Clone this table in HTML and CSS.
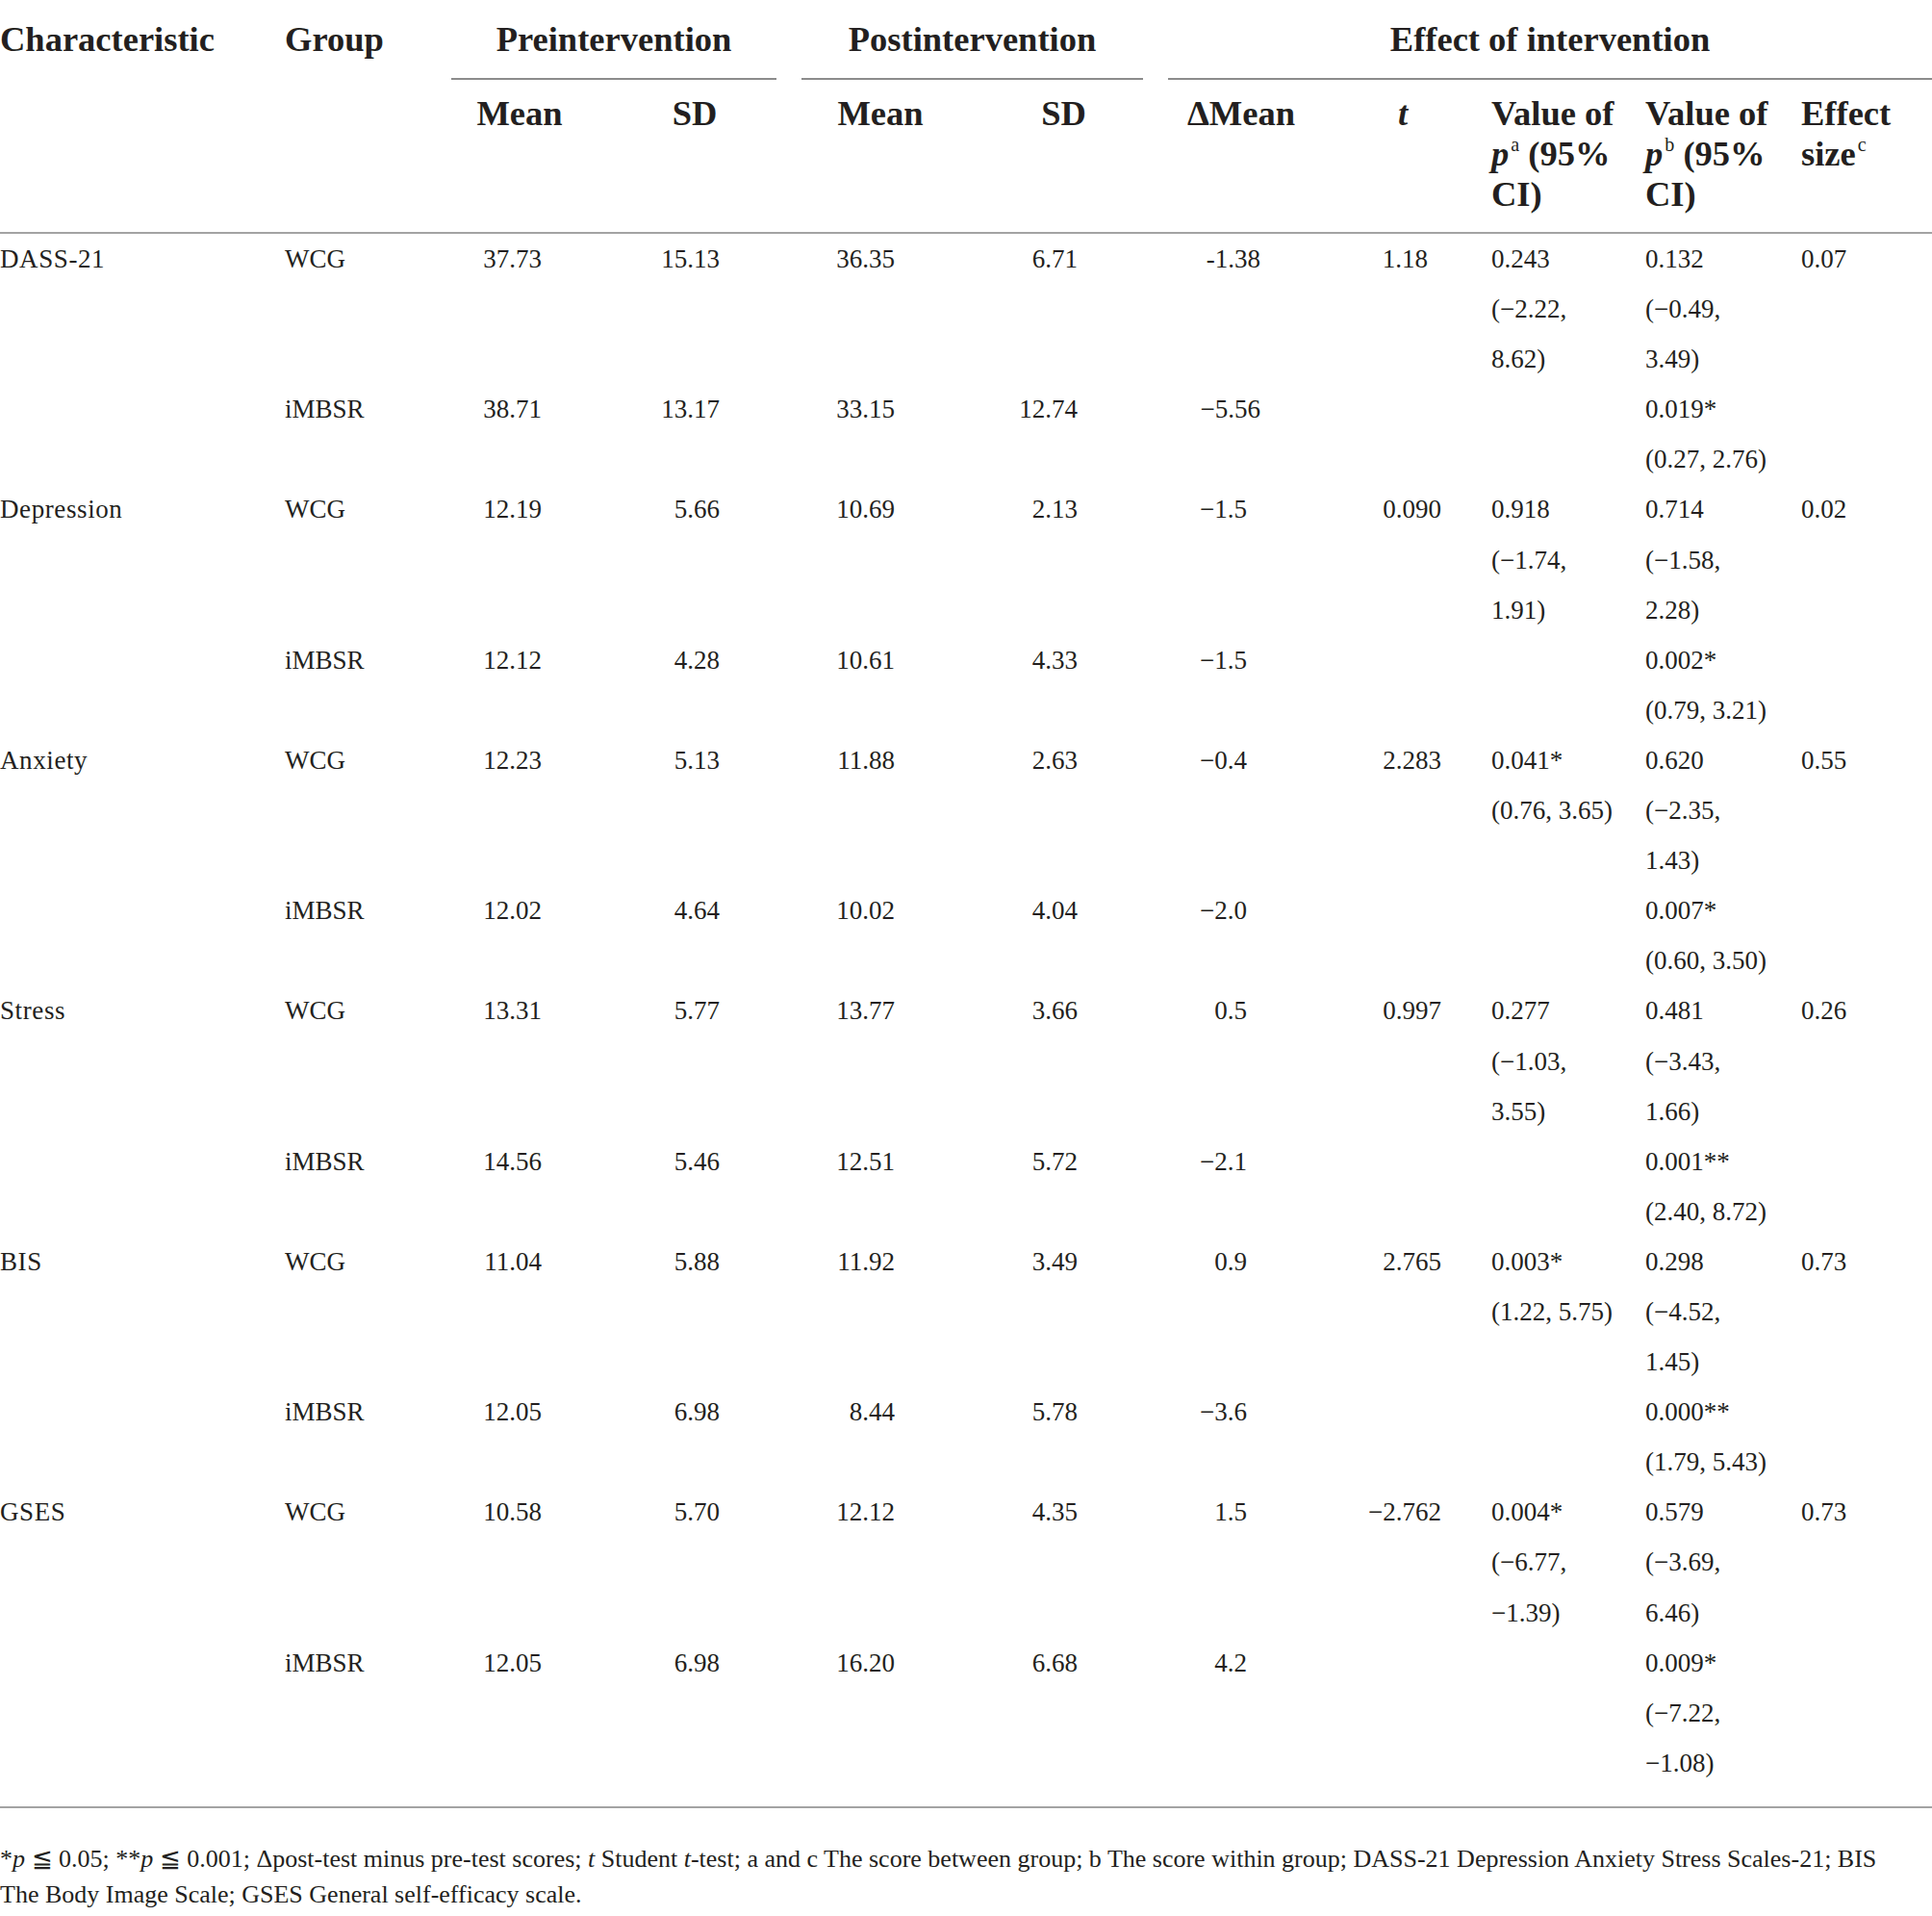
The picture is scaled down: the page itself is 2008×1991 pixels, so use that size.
FILE: index.html
```html
<!DOCTYPE html>
<html lang="en">
<head>
<meta charset="utf-8">
<title>Effect of intervention</title>
<link rel="stylesheet" href="styles.css">
</head>
<body>
<table class="tbl">
  <colgroup>
    <col class="w-char"><col class="w-group"><col class="w-pm"><col class="w-ps"><col class="w-qm"><col class="w-qs"><col class="w-dm"><col class="w-t"><col class="w-pa"><col class="w-pb"><col class="w-es">
  </colgroup>
  <thead>
    <tr class="h1">
      <th rowspan="2" class="c-char">Characteristic</th>
      <th rowspan="2" class="c-group">Group</th>
      <th colspan="2" class="span"><span class="rule">Preintervention</span></th>
      <th colspan="2" class="span"><span class="rule">Postintervention</span></th>
      <th colspan="5" class="span c-last"><span class="rule">Effect of intervention</span></th>
    </tr>
    <tr class="h2">
      <th class="ctr">Mean</th>
      <th class="ctr">SD</th>
      <th class="ctr">Mean</th>
      <th class="ctr">SD</th>
      <th class="ctr">ΔMean</th>
      <th class="ctr"><i>t</i></th>
      <th class="lft">Value of<br><i>p</i><sup>a</sup> (95%<br>CI)</th>
      <th class="lft">Value of<br><i>p</i><sup>b</sup> (95%<br>CI)</th>
      <th class="lft c-last">Effect<br>size<sup>c</sup></th>
    </tr>
  </thead>
  <tbody>
    <tr>
      <td class="c-char">DASS-21</td><td>WCG</td>
      <td class="n pm">37.73</td><td class="n ps">15.13</td><td class="n qm">36.35</td><td class="n qs">6.71</td>
      <td class="n dm">-1.38</td><td class="n tt d2">1.18</td>
      <td>0.243<br>(−2.22,<br>8.62)</td><td>0.132<br>(−0.49,<br>3.49)</td><td class="c-last">0.07</td>
    </tr>
    <tr>
      <td class="c-char"></td><td>iMBSR</td>
      <td class="n pm">38.71</td><td class="n ps">13.17</td><td class="n qm">33.15</td><td class="n qs">12.74</td>
      <td class="n dm">−5.56</td><td></td>
      <td></td><td>0.019*<br>(0.27, 2.76)</td><td class="c-last"></td>
    </tr>
    <tr>
      <td class="c-char">Depression</td><td>WCG</td>
      <td class="n pm">12.19</td><td class="n ps">5.66</td><td class="n qm">10.69</td><td class="n qs">2.13</td>
      <td class="n dm d1">−1.5</td><td class="n tt">0.090</td>
      <td>0.918<br>(−1.74,<br>1.91)</td><td>0.714<br>(−1.58,<br>2.28)</td><td class="c-last">0.02</td>
    </tr>
    <tr>
      <td class="c-char"></td><td>iMBSR</td>
      <td class="n pm">12.12</td><td class="n ps">4.28</td><td class="n qm">10.61</td><td class="n qs">4.33</td>
      <td class="n dm d1">−1.5</td><td></td>
      <td></td><td>0.002*<br>(0.79, 3.21)</td><td class="c-last"></td>
    </tr>
    <tr>
      <td class="c-char">Anxiety</td><td>WCG</td>
      <td class="n pm">12.23</td><td class="n ps">5.13</td><td class="n qm">11.88</td><td class="n qs">2.63</td>
      <td class="n dm d1">−0.4</td><td class="n tt">2.283</td>
      <td>0.041*<br>(0.76, 3.65)</td><td>0.620<br>(−2.35,<br>1.43)</td><td class="c-last">0.55</td>
    </tr>
    <tr>
      <td class="c-char"></td><td>iMBSR</td>
      <td class="n pm">12.02</td><td class="n ps">4.64</td><td class="n qm">10.02</td><td class="n qs">4.04</td>
      <td class="n dm d1">−2.0</td><td></td>
      <td></td><td>0.007*<br>(0.60, 3.50)</td><td class="c-last"></td>
    </tr>
    <tr>
      <td class="c-char">Stress</td><td>WCG</td>
      <td class="n pm">13.31</td><td class="n ps">5.77</td><td class="n qm">13.77</td><td class="n qs">3.66</td>
      <td class="n dm d1">0.5</td><td class="n tt">0.997</td>
      <td>0.277<br>(−1.03,<br>3.55)</td><td>0.481<br>(−3.43,<br>1.66)</td><td class="c-last">0.26</td>
    </tr>
    <tr>
      <td class="c-char"></td><td>iMBSR</td>
      <td class="n pm">14.56</td><td class="n ps">5.46</td><td class="n qm">12.51</td><td class="n qs">5.72</td>
      <td class="n dm d1">−2.1</td><td></td>
      <td></td><td>0.001**<br>(2.40, 8.72)</td><td class="c-last"></td>
    </tr>
    <tr>
      <td class="c-char">BIS</td><td>WCG</td>
      <td class="n pm">11.04</td><td class="n ps">5.88</td><td class="n qm">11.92</td><td class="n qs">3.49</td>
      <td class="n dm d1">0.9</td><td class="n tt">2.765</td>
      <td>0.003*<br>(1.22, 5.75)</td><td>0.298<br>(−4.52,<br>1.45)</td><td class="c-last">0.73</td>
    </tr>
    <tr>
      <td class="c-char"></td><td>iMBSR</td>
      <td class="n pm">12.05</td><td class="n ps">6.98</td><td class="n qm">8.44</td><td class="n qs">5.78</td>
      <td class="n dm d1">−3.6</td><td></td>
      <td></td><td>0.000**<br>(1.79, 5.43)</td><td class="c-last"></td>
    </tr>
    <tr>
      <td class="c-char">GSES</td><td>WCG</td>
      <td class="n pm">10.58</td><td class="n ps">5.70</td><td class="n qm">12.12</td><td class="n qs">4.35</td>
      <td class="n dm d1">1.5</td><td class="n tt">−2.762</td>
      <td>0.004*<br>(−6.77,<br>−1.39)</td><td>0.579<br>(−3.69,<br>6.46)</td><td class="c-last">0.73</td>
    </tr>
    <tr class="last">
      <td class="c-char"></td><td>iMBSR</td>
      <td class="n pm">12.05</td><td class="n ps">6.98</td><td class="n qm">16.20</td><td class="n qs">6.68</td>
      <td class="n dm d1">4.2</td><td></td>
      <td></td><td>0.009*<br>(−7.22,<br>−1.08)</td><td class="c-last"></td>
    </tr>
  </tbody>
</table>
<p class="note">*<i>p</i> ≦ 0.05; **<i>p</i> ≦ 0.001; Δpost-test minus pre-test scores; <i>t</i> Student <i>t</i>-test; a and c The score between group; b The score within group; DASS-21 Depression Anxiety Stress Scales-21; BIS<br>The Body Image Scale; GSES General self-efficacy scale.</p>
</body>
</html>
```

FILE: styles.css
```css
html, body {
  margin: 0;
  padding: 0;
  background: #ffffff;
}

body {
  width: 2008px;
  color: #231f20;
  font-family: "Liberation Serif", "Times New Roman", "DejaVu Serif", serif;
}

.tbl {
  width: 2008px;
  table-layout: fixed;
  border-collapse: collapse;
  border-spacing: 0;
}

.w-char { width: 283px; }
.w-group { width: 173px; }
.w-pm { width: 168px; }
.w-ps { width: 196px; }
.w-qm { width: 190px; }
.w-qs { width: 191px; }
.w-dm { width: 178px; }
.w-t { width: 158px; }
.w-pa { width: 160px; }
.w-pb { width: 162px; }
.w-es { width: 149px; }

th, td {
  padding: 0 13px;
  vertical-align: top;
  text-align: left;
}

.c-char { padding-left: 0; }
.c-last { padding-right: 0; }

thead {
  border-bottom: 2px solid #a3a3a3;
}

th {
  font-size: 36.5px;
  font-weight: bold;
  line-height: 42px;
  white-space: nowrap;
}

th sup {
  font-size: 0.55em;
  line-height: 0;
  vertical-align: 0.75em;
  font-weight: normal;
  margin-left: 2px;
}

.h1 th {
  padding-top: 20px;
}

.h1 .span {
  padding-bottom: 0;
  text-align: center;
}

.rule {
  display: block;
  padding-bottom: 19px;
  border-bottom: 2px solid #8c8c8c;
}

.h2 th {
  padding-top: 14px;
  padding-bottom: 18px;
}

.h2 .ctr { text-align: center; }
.h2 .lft { text-align: left; }

td {
  font-size: 27px;
  line-height: 52.1px;
}

td.c-char {
  letter-spacing: 0.6px;
}

.n { text-align: right; }
.pm { padding-right: 61px; }
.ps { padding-right: 72px; }
.qm { padding-right: 80px; }
.qs { padding-right: 81px; }
.dm { padding-right: 69px; }
.dm.d1 { padding-right: 83px; }
.tt { padding-right: 39px; }
.tt.d2 { padding-right: 53px; }

tbody {
  border-bottom: 2px solid #a3a3a3;
}

tbody .last td {
  padding-bottom: 19px;
}

.note {
  margin: 34px 0 0;
  font-size: 26px;
  line-height: 37px;
  white-space: nowrap;
}
```
